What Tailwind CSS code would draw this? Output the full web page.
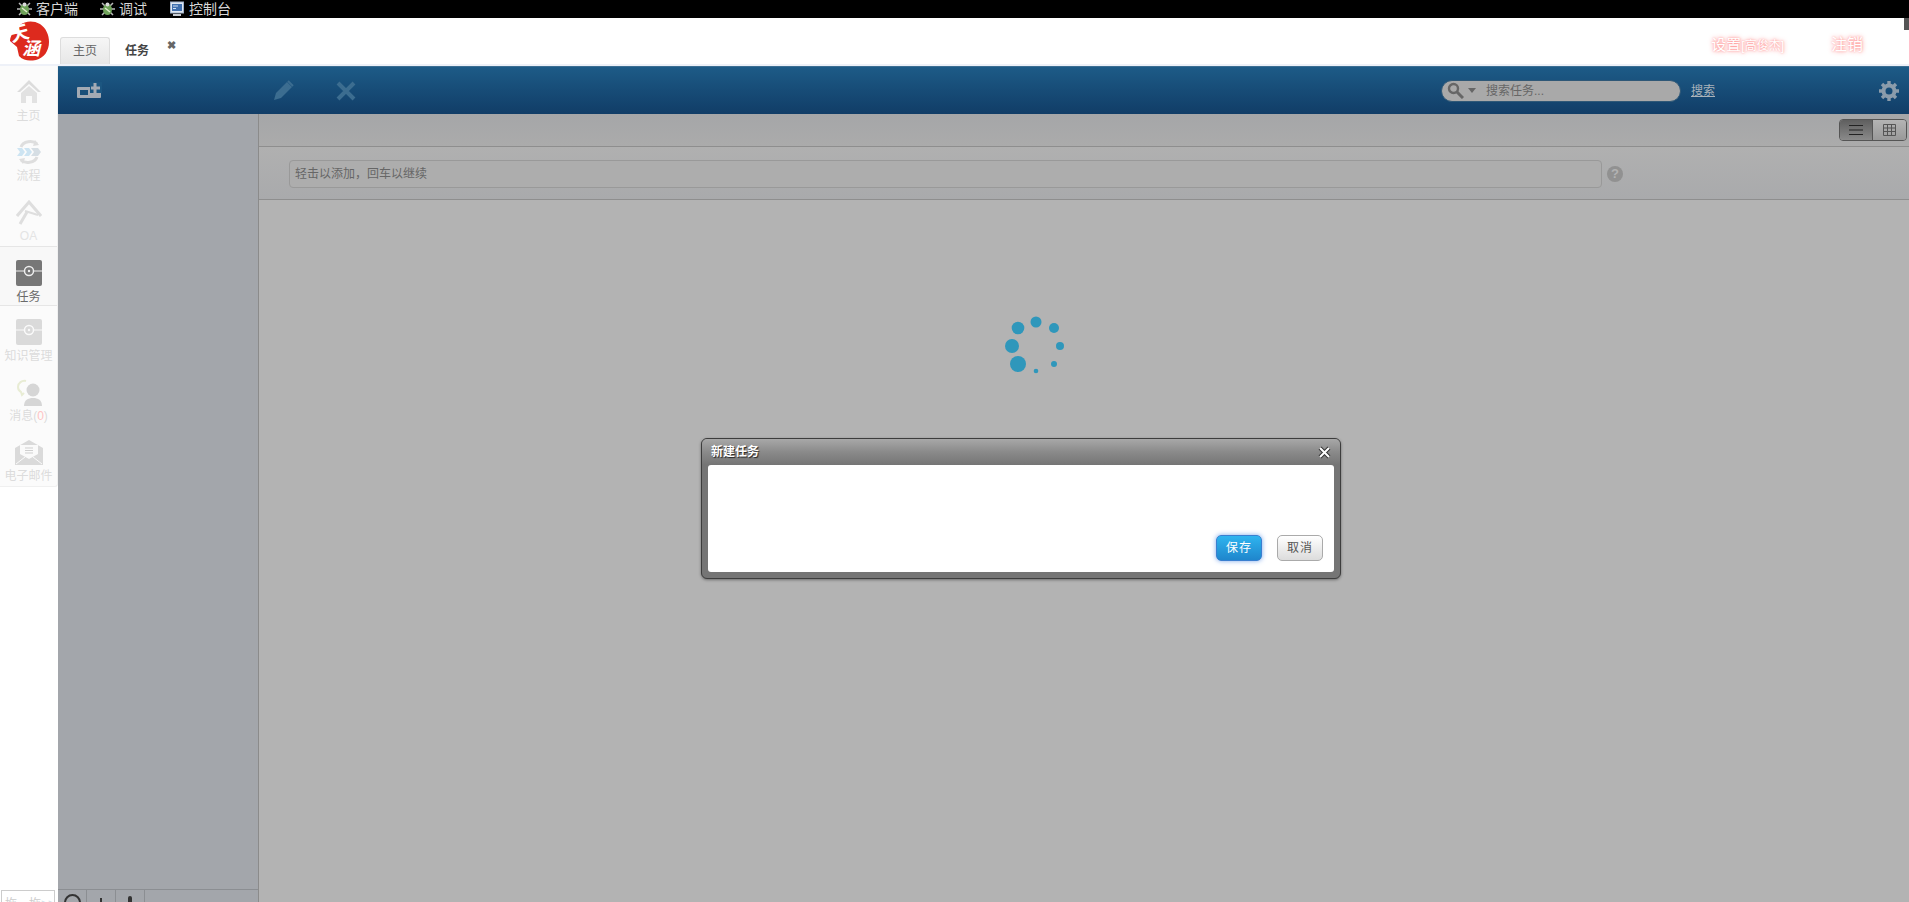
<!DOCTYPE html>
<html lang="zh-CN">
<head>
  <meta charset="UTF-8" />
  <title>任务</title>
  <script src="https://cdn.jsdelivr.net/npm/@tailwindcss/browser@4"></script>
</head>
<body class="font-['Liberation_Sans','Noto_Sans_CJK_SC',sans-serif] text-xs overflow-hidden bg-white">
<div class="relative w-[1909px] h-[902px] overflow-hidden flex flex-col">

  <!-- top menu -->
  <div class="h-[18px] shrink-0 bg-black flex items-center text-[14px] leading-[18px] text-[#d8d8d8] relative">
    <div class="flex items-center w-[99px] pl-[16px] gap-[3px]">
      <svg width="17" height="16" viewBox="0 0 17 16"><path d="M3 2l3 3M14 2l-3 3M1 8h4M16 8h-4M3 14l3-3M14 14l-3-3" stroke="#bbb" stroke-width="1.5"/><ellipse cx="8.5" cy="8.5" rx="4.5" ry="5.5" fill="#6fa35a"/><circle cx="8.5" cy="3.5" r="2" fill="#d9d9d9"/><path d="M6 7l5 4" stroke="#dfeccc" stroke-width="1.5"/></svg>
      <span>客户端</span>
    </div>
    <div class="flex items-center w-[71px] gap-[3px]">
      <svg width="17" height="16" viewBox="0 0 17 16"><path d="M3 2l3 3M14 2l-3 3M1 8h4M16 8h-4M3 14l3-3M14 14l-3-3" stroke="#bbb" stroke-width="1.5"/><ellipse cx="8.5" cy="8.5" rx="4.5" ry="5.5" fill="#6fa35a"/><circle cx="8.5" cy="3.5" r="2" fill="#d9d9d9"/><path d="M6 7l5 4" stroke="#dfeccc" stroke-width="1.5"/></svg>
      <span>调试</span>
    </div>
    <div class="flex items-center gap-[5px]">
      <svg width="14" height="16" viewBox="0 0 14 16"><rect x="0.5" y="1" width="13" height="11" fill="#dfe7f2" stroke="#9fb0c8"/><rect x="2" y="3" width="10" height="7" fill="#3f6fae"/><path d="M3 5h5M3 7.5h3" stroke="#cfe0f5"/><rect x="3" y="13" width="8" height="2" fill="#c8ccd2"/></svg>
      <span>控制台</span>
    </div>
    <div class="absolute right-0 top-[18px] w-[5px] h-[12px] bg-[#555] z-10"></div>
  </div>

  <!-- header with tabs -->
  <div class="h-[48px] shrink-0 bg-white border-b-2 border-[#eef1f8] flex relative">
    <div class="w-[60px] shrink-0 pt-[2px] pl-[9px]">
      <svg width="41" height="42" viewBox="0 0 41 42"><path d="M11 5C16 1 24 0 31 4c6 4 9 11 9 18 0 9-5 16-13 18-7 1-12 1-17-4l-2-9-7-6c0-4 2-7 4-9l3 2z" fill="#dd2a1e"/><text x="1" y="20" font-size="19" font-weight="700" fill="#fff" transform="rotate(-14 10 14)">天</text><text x="13" y="35" font-size="18" font-weight="700" fill="#fff" font-style="italic">涵</text></svg>
    </div>
    <div class="self-end w-[50px] h-[27px] flex items-center justify-center rounded-t-[3px] border border-b-0 border-[#ddd] bg-linear-to-b from-[#f6f6f6] to-[#e7e7e7] text-[#666]">主页</div>
    <div class="self-end h-[27px] ml-[15px] flex items-center font-bold text-[#444]">任务</div>
    <div class="ml-[18px] mt-[21px] text-[11px] leading-[12px] font-bold text-[#666]">✖</div>
    <div class="ml-auto flex items-start text-white [text-shadow:0_0_5px_#ff8080,0_0_2px_#ffa0a0] pt-[18px]">
      <span class="text-[15px] leading-[18px]">设置<span class="text-[12px]">[高俊杰]</span></span>
      <span class="ml-[47px] mr-[46px] text-[16px] leading-[18px]">注销</span>
    </div>
  </div>

  <div class="flex flex-1 min-h-0">
    <!-- left rail -->
    <div class="w-[58px] shrink-0 flex flex-col text-[#dcdcdc] text-center">
      <div class="bg-[#fbfbfb] border-r border-b border-[#f0f0f0] rounded-br-[3px]">
        <div class="h-[60px] flex flex-col items-center pt-[13px]">
          <svg width="26" height="26" viewBox="0 0 26 26"><path d="M13 1L1 13h3L13 5l9 8h3z" fill="#dcdcdc"/><path d="M5 14l8-7 8 7v10h-5v-7h-6v7H5z" fill="#e2e2e2"/></svg>
          <span class="leading-[16px] mt-[3px]">主页</span>
        </div>
        <div class="h-[60px] flex flex-col items-center pt-[13px]">
          <svg width="26" height="26" viewBox="0 0 26 26"><path d="M5 8c2-6 12-7 16-3M21 18c-2 6-12 7-16 3" fill="none" stroke="#dedede" stroke-width="3"/><path d="M19 1l4 5-6 1zM7 25l-4-5 6-1z" fill="#dedede"/><path d="M1 9h5l3 4-3 4H1l3-4zM8 9h5l3 4-3 4H8l3-4z" fill="#cde4f2"/><path d="M15 9h7l3 4-3 4h-7l3-4z" fill="#d6dee4"/></svg>
          <span class="leading-[16px] mt-[3px]">流程</span>
        </div>
        <div class="h-[60px] flex flex-col items-center pt-[13px]">
          <svg width="26" height="26" viewBox="0 0 26 26"><path d="M1 17L13 3l12 14" fill="none" stroke="#dedede" stroke-width="3"/><path d="M4 25l7-12" stroke="#dedede" stroke-width="3"/><path d="M9 12l13 4" stroke="#dedede" stroke-width="2"/></svg>
          <span class="leading-[16px] mt-[3px] text-[#e4e4e4]">OA</span>
        </div>
        <div class="h-[60px] flex flex-col items-center pt-[13px] bg-[#f8f8f8] border-y border-[#e6e6e6] text-[#6a6a6a]">
          <svg width="26" height="26" viewBox="0 0 26 26"><rect width="26" height="26" rx="2" fill="#777"/><path d="M0 11h26" stroke="#eee"/><circle cx="13" cy="11" r="4.5" fill="#777" stroke="#eee" stroke-width="1.5"/><circle cx="13" cy="11" r="1.2" fill="#eee"/></svg>
          <span class="leading-[16px] mt-[3px]">任务</span>
        </div>
        <div class="h-[60px] flex flex-col items-center pt-[13px]">
          <svg width="26" height="26" viewBox="0 0 26 26"><rect width="26" height="26" rx="2" fill="#dadada"/><path d="M0 11h26" stroke="#fafafa"/><circle cx="13" cy="11" r="4.5" fill="#dadada" stroke="#fafafa" stroke-width="1.5"/><circle cx="13" cy="11" r="1.2" fill="#fafafa"/></svg>
          <span class="leading-[16px] mt-[3px] whitespace-nowrap">知识管理</span>
        </div>
        <div class="h-[60px] flex flex-col items-center pt-[13px]">
          <svg width="30" height="28" viewBox="0 0 30 28"><path d="M12 2c-4-1-8 2-8 6 0 2 1 4 3 5l1 3 2-2" fill="none" stroke="#e8ecd4" stroke-width="2"/><circle cx="19" cy="11" r="6.5" fill="#d6d6d6"/><path d="M10 27c0-6 4-8 9-8s9 2 9 8z" fill="#d6d6d6"/></svg>
          <span class="leading-[16px] mt-px">消息<span>(</span><span class="text-[#ffc4c4]">0</span><span>)</span></span>
        </div>
        <div class="h-[60px] flex flex-col items-center pt-[13px]">
          <svg width="28" height="26" viewBox="0 0 28 26"><path d="M0 9L14 1l14 8v17H0z" fill="#dadada"/><path d="M5 6h18v9l-9 5-9-5z" fill="#fafafa"/><path d="M10 9h8M10 11.5h8M10 14h8" stroke="#cfcfcf"/><path d="M1 25l9-7M27 25l-9-7" stroke="#fafafa"/></svg>
          <span class="leading-[16px] mt-[3px] whitespace-nowrap">电子邮件</span>
        </div>
      </div>
      <div class="mt-auto mb-[-18px] ml-px w-[54px] h-[30px] shrink-0 border border-[#ccc] text-left pl-[3px] text-[#ccc] leading-[26px] whitespace-nowrap overflow-hidden">拖　拖<span class="text-[#cfe0e8]">&gt;&gt;</span></div>
    </div>

    <div class="flex-1 min-w-0 flex flex-col">
      <!-- blue toolbar -->
      <div class="h-[48px] shrink-0 flex items-center bg-linear-to-b from-[#1d5b87] to-[#113d67] border-t border-[#3c6e93] relative">
        <svg class="ml-[19px]" width="25" height="17" viewBox="0 0 25 17"><rect x="0" y="5" width="24" height="11" rx="1" fill="#a3aab3"/><rect x="3" y="8" width="8" height="5" fill="#1a4f78"/><rect x="13" y="0" width="12" height="11" fill="#1c5680"/><path d="M18 1v10M14 6h9" stroke="#a3aab3" stroke-width="3"/></svg>
        <svg class="ml-[171px]" width="21" height="21" viewBox="0 0 21 21"><path d="M1 20l2-7L14 2l5 5L8 18z" fill="#3c6d90"/><path d="M15 1l5 5" stroke="#3c6d90" stroke-width="2"/></svg>
        <svg class="ml-[42px]" width="20" height="20" viewBox="0 0 20 20"><path d="M2 2l16 16M18 2L2 18" stroke="#3c6d90" stroke-width="4"/></svg>
        <div class="ml-[1085px] w-[240px] h-[22px] rounded-full bg-[#a9a9a9] border border-[#2f5877] flex items-center pl-[5px] text-[#666]">
          <svg width="17" height="17" viewBox="0 0 17 17"><circle cx="6.500" cy="6.500" r="4.500" fill="none" stroke="#666" stroke-width="2.400"/><path d="M10 10l6 6" stroke="#666" stroke-width="3"/></svg>
          <svg class="ml-[4px]" width="8" height="5" viewBox="0 0 8 5"><path d="M0 0h8L4 5z" fill="#666"/></svg>
          <span class="ml-[10px]">搜索任务...</span>
        </div>
        <a class="ml-[10px] text-[#a9b2ba] underline">搜索</a>
        <svg class="ml-[164px]" width="20" height="20" viewBox="0 0 20 20"><circle cx="10" cy="10" r="5.500" fill="none" stroke="#8b9cab" stroke-width="4"/><path d="M10 0v4M10 16v4M0 10h4M16 10h4M3 3l3 3M14 14l3 3M17 3l-3 3M6 14l-3 3" stroke="#8b9cab" stroke-width="3.400"/></svg>
      </div>

      <div class="flex-1 min-h-0 flex">
        <!-- tree panel -->
        <div class="w-[201px] shrink-0 bg-[#a3a6ab] border-r border-[#8b8b8b] flex flex-col">
          <div class="mt-auto mb-[-17px] h-[30px] shrink-0 border-t border-[#8b8e92] flex">
            <div class="w-[29px] border-r border-[#8b8e92] flex justify-center pt-[4px]"><div class="w-[17px] h-[17px] rounded-full border-2 border-[#333]"></div></div>
            <div class="w-[29px] border-r border-[#8b8e92] flex justify-center pt-[8px]"><div class="w-[2px] h-[10px] bg-[#333]"></div></div>
            <div class="w-[29px] border-r border-[#8b8e92] flex justify-center pt-[6px]"><div class="w-[4px] h-[10px] rounded-full bg-[#333]"></div></div>
          </div>
        </div>

        <!-- main -->
        <div class="flex-1 min-w-0 flex flex-col bg-[#b3b3b3]">
          <div class="h-[33px] shrink-0 bg-linear-to-b from-[#a5a6a8] to-[#ababab] border-b border-[#8e8e8e] flex items-center justify-end pr-[2px]">
            <div class="flex w-[68px] h-[22px] rounded-[4px] border border-[#555] overflow-hidden">
              <div class="w-[33px] border-r border-[#555] bg-linear-to-b from-[#5f5f5f] to-[#8a8a8a] flex items-center justify-center">
                <svg width="14" height="12" viewBox="0 0 14 12"><path d="M0 1.500h14M0 6h14M0 10.500h14" stroke="#222"/></svg>
              </div>
              <div class="flex-1 bg-linear-to-b from-[#b4b4b4] to-[#999] flex items-center justify-center">
                <svg width="13" height="12" viewBox="0 0 13 12"><path d="M.5.5h12v11H.5zM.5 4h12M.5 7.500h12M4.500.5v11M8.500.5v11" fill="none" stroke="#555"/></svg>
              </div>
            </div>
          </div>
          <div class="h-[53px] shrink-0 bg-linear-to-b from-[#b0b0b0] to-[#a9aaac] border-b border-[#8e8e8e] flex items-center pl-[30px] pt-[2px]">
            <div class="w-[1313px] h-[28px] rounded-[4px] border border-[#999] bg-[#adadad] pl-[5px] leading-[26px] text-[#666]">轻击以添加，回车以继续</div>
            <div class="ml-[5px] w-[16px] h-[16px] rounded-full bg-[#919191] text-[#b3b3b3] font-bold text-[13px] leading-[16px] text-center">?</div>
          </div>
          <div class="flex-1"></div>
        </div>
      </div>
    </div>
  </div>

  <!-- loading spinner -->
  <svg class="absolute left-[1000px] top-[315px]" width="70" height="65" viewBox="1000 315 70 65">
    <g fill="#2f97bb">
      <circle cx="1018" cy="328" r="6.300"/><circle cx="1036" cy="322" r="5.500"/><circle cx="1054" cy="328" r="5"/><circle cx="1060" cy="346" r="4"/>
      <circle cx="1054" cy="364" r="3"/><circle cx="1036" cy="371" r="2.300"/><circle cx="1018" cy="364" r="8"/><circle cx="1012" cy="346" r="7"/>
    </g>
  </svg>

  <!-- new task dialog -->
  <div class="absolute left-[701px] top-[438px] w-[640px] h-[141px] rounded-[6px] border border-[#3d3d3d] bg-[#757575] shadow-[0_1px_3px_#0006] flex flex-col px-[6px] pb-[6px] overflow-hidden">
    <div class="-mx-[6px] h-[26px] shrink-0 bg-linear-to-b from-[#a8a8a8] via-[#8a8a8a] to-[#757575] flex items-center justify-between px-[9px]">
      <span class="text-white font-bold [text-shadow:1px_1px_1px_#222]">新建任务</span>
      <svg width="13" height="13" viewBox="0 0 13 13"><path d="M2 2l9 9M11 2l-9 9" stroke="#333" stroke-width="4"/><path d="M2 2l9 9M11 2l-9 9" stroke="#fff" stroke-width="2"/></svg>
    </div>
    <div class="flex-1 bg-white rounded-[3px] flex items-end justify-end pr-[11px] pb-[11px] gap-[15px]">
      <button class="w-[46px] h-[26px] rounded-[5px] border border-[#3a7fd0] bg-linear-to-b from-[#2fb4ef] to-[#1f86cc] text-white tracking-[1px] shadow-[0_0_5px_#7da8ea]">保存</button>
      <button class="w-[46px] h-[26px] rounded-[5px] border border-[#aaa] bg-linear-to-b from-white to-[#dcdcdc] text-[#555] tracking-[1px]">取消</button>
    </div>
  </div>
</div>
</body>
</html>
